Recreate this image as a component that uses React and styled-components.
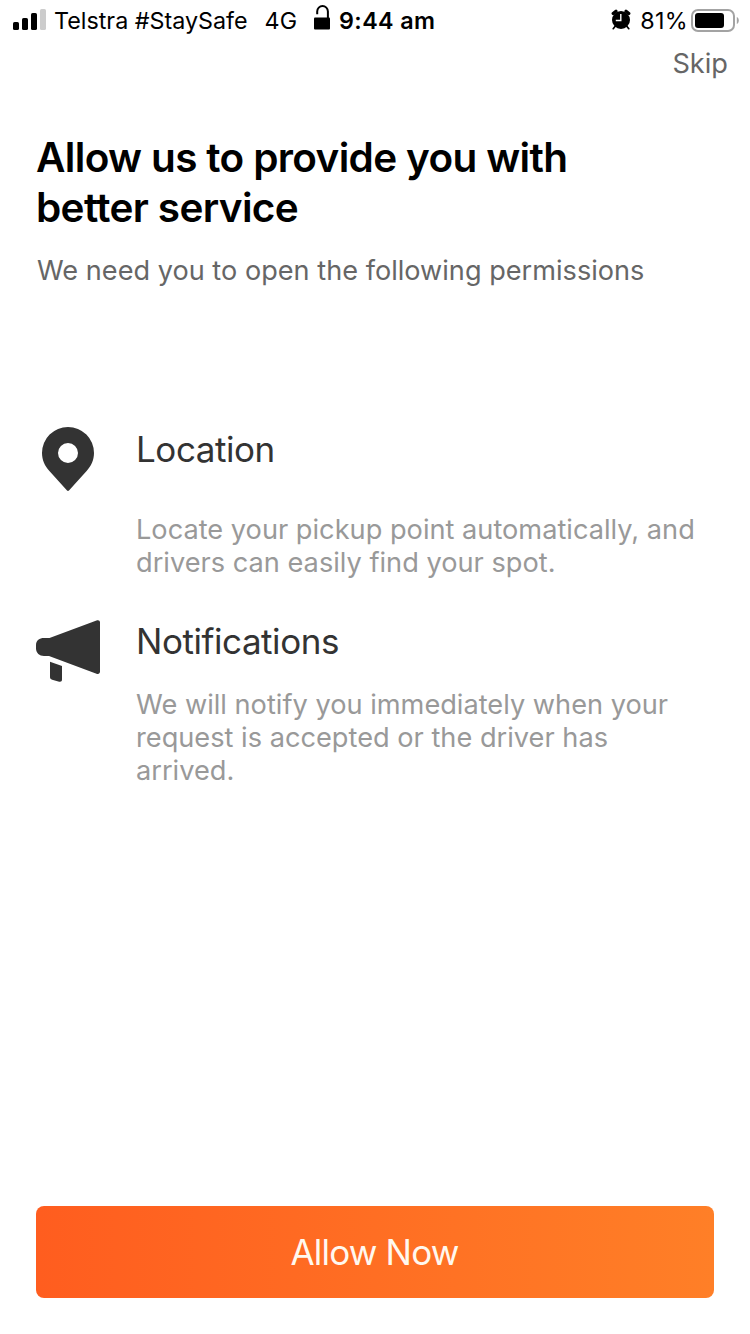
import React from 'react';
import styled, { createGlobalStyle } from 'styled-components';

const GlobalStyle = createGlobalStyle`
  * {
    box-sizing: border-box;
  }

  body {
    margin: 0;
    background-color: #fff;
    font-family: Inter, 'Liberation Sans', sans-serif;
  }

  h1, h2, p {
    margin: 0;
  }

  svg {
    display: block;
    flex-shrink: 0;
  }
`;

const Screen = styled.div`
  width: 750px;
  height: 1334px;
  display: flex;
  flex-direction: column;
  background-color: #fff;
  overflow: hidden;
`;

const StatusBar = styled.header`
  display: flex;
  align-items: center;
  height: 40px;
  padding: 0 11px 0 13px;
  color: #000;
`;

const StatusText = styled.span`
  font-size: 23.3px;
  line-height: 42px;
  padding-top: 1px;
  white-space: nowrap;
  font-weight: ${({ $bold }) => ($bold ? 600 : 400)};
  letter-spacing: ${({ $spacing }) => $spacing || 0}px;
  margin-left: ${({ $left }) => $left || 0}px;
`;

const LockIcon = styled.svg`
  margin: -5px 0 0 17px;
`;

const RightStatus = styled.div`
  display: flex;
  align-items: center;
  margin-left: auto;
`;

const BatteryIcon = styled.svg`
  margin-left: 3px;
`;

const TopRow = styled.div`
  display: flex;
  justify-content: flex-end;
  height: 48px;
  padding: 0 22px;
`;

const SkipButton = styled.button`
  border: 0;
  padding: 0;
  background: none;
  color: #666;
  font-family: inherit;
  font-size: 27.2px;
  line-height: 48px;
  height: 48px;
`;

const Intro = styled.section`
  height: 339px;
  padding: 45px 36px 0;
`;

const Title = styled.h1`
  font-size: 40.5px;
  font-weight: 600;
  line-height: 50px;
  letter-spacing: -0.65px;
  color: #000;
`;

const Subtitle = styled.p`
  margin-top: 21px;
  padding-left: 1px;
  font-size: 27.1px;
  line-height: 34px;
  letter-spacing: 0.02px;
  color: #666;
`;

const Permission = styled.section`
  display: flex;
  height: ${({ $height }) => $height}px;
  padding-left: 36px;
`;

const IconBox = styled.div`
  width: 64px;
  margin-right: 36px;
`;

const Name = styled.h2`
  font-size: 35px;
  font-weight: 400;
  line-height: 44px;
  letter-spacing: -0.45px;
  color: #333;
`;

const Description = styled.p`
  margin-top: ${({ $top }) => $top}px;
  font-size: 27.2px;
  line-height: 33px;
  color: #999;
  white-space: nowrap;
`;

const Footer = styled.footer`
  margin-top: auto;
  padding: 0 36px 36px;
`;

const AllowButton = styled.button`
  display: block;
  width: 100%;
  height: 92px;
  padding: 0 1px 0 0;
  border: 0;
  border-radius: 8px;
  background: linear-gradient(90deg, #ff5d1f, #ff7f27);
  color: #fff8ef;
  font-family: inherit;
  font-size: 35px;
  letter-spacing: -0.8px;
`;

function Signal() {
  return (
    <svg width="33" height="22" viewBox="0 0 33 22">
      <rect x="0" y="13" width="6" height="8" rx="1.6" />
      <rect x="9" y="9" width="6" height="12" rx="1.6" />
      <rect x="18" y="4" width="6" height="17" rx="1.6" />
      <rect x="27" y="0" width="6" height="21" rx="1.6" fill="#ccc" />
    </svg>
  );
}

function Lock() {
  return (
    <LockIcon width="17" height="26" viewBox="0 0 17 26">
      <rect x="0" y="12.5" width="16" height="12" rx="1" />
      <path d="M3.200 9.300V6.400a5.350 5.350 0 0 1 10.700 0V14" fill="none" stroke="#000" strokeWidth="2" />
    </LockIcon>
  );
}

function Alarm() {
  return (
    <svg width="20" height="22" viewBox="0 0 20 22">
      <circle cx="10" cy="11" r="9" />
      <path d="M2.200 4.600 5 2.300M17.800 4.600 15 2.300" stroke="#000" strokeWidth="3.2" strokeLinecap="round" />
      <path d="M4 17.500 2.200 19.700M16 17.500l1.800 2.200" stroke="#000" strokeWidth="1.7" strokeLinecap="round" />
      <path d="M9.800 5V11.500H4.800" fill="none" stroke="#fff" strokeWidth="1.4" />
    </svg>
  );
}

function Battery() {
  return (
    <BatteryIcon width="48" height="23" viewBox="0 0 48 23">
      <rect x="1" y="1" width="42" height="21" rx="6" fill="none" stroke="#a3a3a3" strokeWidth="2" />
      <rect x="4" y="4" width="29" height="15" rx="3" />
      <path d="M45.800 8v7c1.200-.5 2-1.900 2-3.500s-.8-3-2-3.500z" fill="#a3a3a3" />
    </BatteryIcon>
  );
}

function Pin() {
  return (
    <svg width="64" height="64" viewBox="0 0 64 64">
      <path
        fill="#333"
        fillRule="evenodd"
        d="M32 0a26 26 0 0 1 26 26c0 7-2.800 13-7.400 18L33.200 63.300a1.700 1.700 0 0 1-2.400 0L13.400 44C8.800 39 6 33 6 26A26 26 0 0 1 32 0zm0 16a10 10 0 1 0 0 20 10 10 0 0 0 0-20z"
      />
    </svg>
  );
}

function Megaphone() {
  return (
    <svg width="64" height="64" viewBox="0 -0.6 64 64">
      <path
        fill="#333"
        d="M8 18.500h5.500L60.500 1C62.500.3 64 1 64 2.800V52c0 2-1.500 2.800-3.500 2.100L13 36.500H8C3.500 36.500 0 33.500 0 29v-3.500C0 21 3.500 18.500 8 18.500z"
      />
      <path fill="#333" d="M14 42.200l12 4.300V60c0 1.700-1.200 2.500-2.800 2.100l-7-2C14.700 59.600 14 58.700 14 57.300z" />
    </svg>
  );
}

function App() {
  return (
    <>
      <GlobalStyle />
      <Screen>
        <StatusBar>
          <Signal />
          <StatusText $left={8}>Telstra #StaySafe</StatusText>
          <StatusText $left={17}>4G</StatusText>
          <Lock />
          <StatusText $bold $left={8} $spacing={0.4}>9:44 am</StatusText>
          <RightStatus>
            <Alarm />
            <StatusText $left={9} $spacing={0.3}>81%</StatusText>
            <Battery />
          </RightStatus>
        </StatusBar>

        <TopRow>
          <SkipButton>Skip</SkipButton>
        </TopRow>

        <Intro>
          <Title>
            Allow us to provide you with
            <br />
            better service
          </Title>
          <Subtitle>We need you to open the following permissions</Subtitle>
        </Intro>

        <Permission $height={192}>
          <IconBox>
            <Pin />
          </IconBox>
          <div>
            <Name>Location</Name>
            <Description $top={42}>
              Locate your pickup point automatically, and
              <br />
              drivers can easily find your spot.
            </Description>
          </div>
        </Permission>

        <Permission $height={180}>
          <IconBox>
            <Megaphone />
          </IconBox>
          <div>
            <Name>Notifications</Name>
            <Description $top={25}>
              We will notify you immediately when your
              <br />
              request is accepted or the driver has
              <br />
              arrived.
            </Description>
          </div>
        </Permission>

        <Footer>
          <AllowButton>Allow Now</AllowButton>
        </Footer>
      </Screen>
    </>
  );
}

export default App;
